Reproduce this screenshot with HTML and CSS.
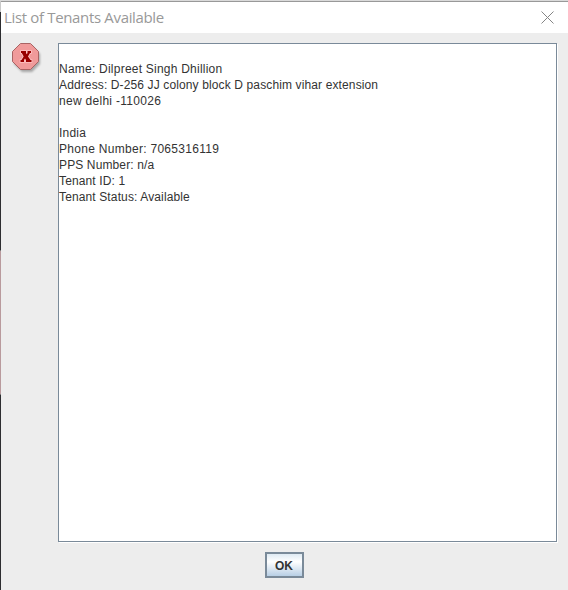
FILE: index.html
```
<!DOCTYPE html>
<html lang="en">
<head>
<meta charset="utf-8">
<title>List of Tenants Available</title>
<link rel="stylesheet" href="styles.css">
</head>
<body>
<div class="window">
  <div class="edge"><div class="edge-accent"></div></div>
  <div class="dialog">
    <header class="titlebar">
      <h1 class="title">List of Tenants Available</h1>
      <svg class="close" width="13" height="13" viewBox="0 0 13 13"><path d="M.5 .5l12 12M12.5 .5l-12 12" fill="none" stroke="#858585" stroke-width="1"/></svg>
    </header>
    <main class="content">
      <svg class="error-icon" width="32" height="32" viewBox="0 0 32 32">
        <defs><filter id="soft" x="-20%" y="-20%" width="150%" height="150%"><feGaussianBlur stdDeviation="1.3"/></filter></defs>
        <path d="M10 3h10l8 8v10l-8 8H10l-8-8V11z" fill="#777" opacity=".6" filter="url(#soft)"/>
        <path d="M8.500 .5h10l8 8v10l-8 8h-10l-8-8v-10z" fill="#f09a9a" stroke="#a96363"/>
        <path d="M9 8h5v2l.8 1.300L15.500 10V8H19v2h-1l-2 3.500 2.500 3.500h1v2H14v-2l-1-1.500-1 1.500v2H8.500v-2h1l2.200-3.500L9.800 10H9z" fill="#990000" stroke="#ffc4c4" stroke-width="1.600" paint-order="stroke"/>
      </svg>
      <div class="textarea"><p class="wider">Name: Dilpreet Singh Dhillion</p><p>Address: D-256 JJ colony block D paschim vihar extension</p><p class="widest">new delhi -110026</p><p></p><p class="wider">India</p><p class="widest">Phone Number: 7065316119</p><p>PPS Number: n/a</p><p>Tenant ID: 1</p><p>Tenant Status: Available</p></div>
    </main>
    <footer class="actions"><button class="ok">OK</button></footer>
  </div>
</div>
</body>
</html>
```
FILE: styles.css
```
* { box-sizing: border-box; }
body { margin: 0; width: 568px; height: 590px; overflow: hidden; background: #ededed; font-family: "Liberation Sans", Arial, sans-serif; }
.window { display: flex; height: 590px; border-top: 1px solid #dadada; }
.edge { width: 1px; padding-top: 249px; background: linear-gradient(#c9c9c9 0 11px, #2d2d30 11px); }
.edge-accent { height: 145px; background: #b99a9d; border-top: 1px solid #777; border-bottom: 1px solid #777; }
.dialog { flex: 1; border-top: 1px solid #999; }
.titlebar { display: flex; justify-content: space-between; height: 31px; padding: 0 14px 0 3px; background: #fff; }
.title { margin: 0; font: 400 15px/31px "Open Sans", sans-serif; color: #999; white-space: nowrap; letter-spacing: -.34px; }
.close { margin-top: 9px; }
.content { display: flex; padding: 10px 10px 0 11px; }
.error-icon { flex: none; margin-right: 14px; }
.textarea { width: 499px; height: 499px; padding-top: 17px; background: #fff; border: 1px solid #7a8a99; box-shadow: 1px 1px 0 #fff; }
.textarea p { margin: 0; height: 16px; font-size: 12px; line-height: 16px; letter-spacing: .125px; color: #333; white-space: pre; }
.textarea .wider { letter-spacing: .23px; }
.textarea .widest { letter-spacing: .29px; }
.actions { display: flex; justify-content: center; padding: 10px 0 0; }
.ok { width: 39px; height: 26px; margin-left: -1px; padding: 2px 0 0; border: 2px solid #7a8a99; background: linear-gradient(#dfeaf3, #fff 35%, #b8cfe5); color: #333; font: 700 12px/20px "Liberation Sans", Arial, sans-serif; }
```
